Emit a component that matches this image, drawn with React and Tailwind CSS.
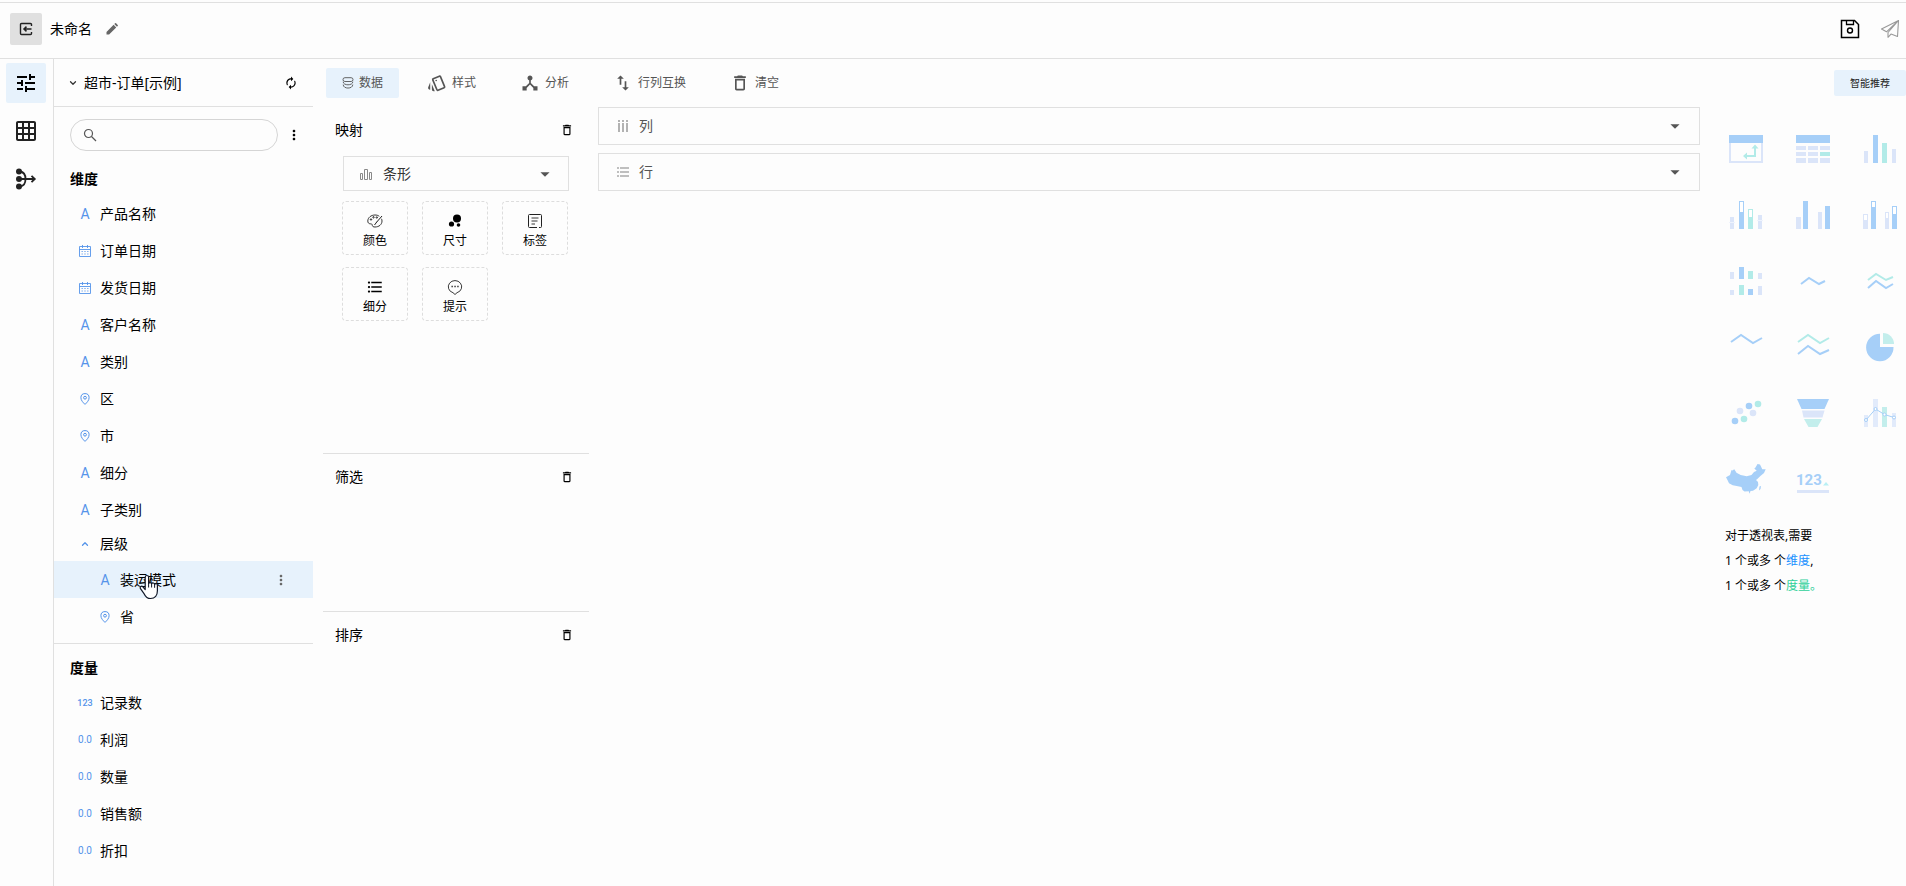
import { useState } from 'react';
import {
  MdArrowDropDown,
  MdAutorenew,
  MdFormatListBulleted,
  MdGridOn,
  MdMoreVert,
  MdOutlineDelete,
  MdOutlineDeviceHub,
  MdOutlineStyle,
  MdSwapVert,
  MdTune,
} from 'react-icons/md';
import { ChevronDown, ChevronUp } from 'lucide-react';
import clsx from 'clsx';

const BLUE = '#a6cff8';
const LIGHT = '#dbe5f9';
const TEAL = '#b2ebe8';

const dimensions = [
  { name: '产品名称', type: 'text' },
  { name: '订单日期', type: 'date' },
  { name: '发货日期', type: 'date' },
  { name: '客户名称', type: 'text' },
  { name: '类别', type: 'text' },
  { name: '区', type: 'geo' },
  { name: '市', type: 'geo' },
  { name: '细分', type: 'text' },
  { name: '子类别', type: 'text' },
];

const measures = [
  { name: '记录数', type: 'int' },
  { name: '利润', type: 'decimal' },
  { name: '数量', type: 'decimal' },
  { name: '销售额', type: 'decimal' },
  { name: '折扣', type: 'decimal' },
];

/* ---------- icons ---------- */

function Svg({ size = 16, className, children }) {
  return (
    <svg width={size} height={size} viewBox={`0 0 ${size} ${size}`} fill="none" stroke="currentColor" className={clsx('shrink-0', className)} aria-hidden="true">
      {children}
    </svg>
  );
}

const BackIcon = () => (
  <Svg size={14} className="text-[#222]">
    <path d="M12.5 4V2.5a1 1 0 0 0-1-1h-9a1 1 0 0 0-1 1v9a1 1 0 0 0 1 1h9a1 1 0 0 0 1-1V10" strokeWidth="1.4" />
    <path d="M12.5 7H5.5M7.5 4.6 5 7l2.5 2.4" strokeWidth="1.5" />
  </Svg>
);

const PencilIcon = () => (
  <Svg size={12} className="text-[#666]">
    <path d="M.5 11.5v-2.600L7.600 1.800l2.600 2.600L3.100 11.500zM8.300 1.100l.8-.8a.7.7 0 0 1 1 0l1.600 1.600a.7.7 0 0 1 0 1l-.8.8z" fill="currentColor" stroke="none" />
  </Svg>
);

const SaveIcon = () => (
  <Svg size={20} className="text-black">
    <path d="M1.500 1.500h13l4 4v13h-17z" strokeWidth="1.500" />
    <path d="M6.500 1.500v4h7v-4" strokeWidth="1.300" />
    <circle cx="10" cy="11.500" r="2.500" strokeWidth="1.400" />
  </Svg>
);

const SendIcon = () => (
  <Svg size={20} className="text-[#999]">
    <path d="M18.500 1.500 1.500 10l5 2.800L18.500 1.500 8 13.500v4.800l3-3.200 6.500 2.400z" strokeWidth="1.100" strokeLinejoin="round" />
  </Svg>
);

const MergeIcon = () => (
  <Svg size={22} className="text-[#222]">
    <g fill="currentColor" stroke="none">
      <circle cx="4" cy="3.500" r="3" />
      <circle cx="4" cy="11" r="3" />
      <circle cx="4" cy="18.500" r="3" />
    </g>
    <path d="M5 3.500c4 .5 5.500 4 5.500 7.500S9 18 5 18.500M4 11h15.500M16.500 7.800 19.800 11l-3.300 3.200" strokeWidth="1.800" />
  </Svg>
);

const SearchIcon = () => (
  <Svg size={14} className="text-[#555]">
    <circle cx="5.500" cy="5.500" r="4" strokeWidth="1.200" />
    <path d="m8.500 8.500 4.500 4.500" strokeWidth="1.300" />
  </Svg>
);

const DatabaseIcon = () => (
  <Svg size={12} className="text-[#555]">
    <rect x="1" y=".7" width="10" height="3.800" rx="1.900" strokeWidth=".9" />
    <path d="M1.200 4.800c0 4 9.600 4 9.600 0M1.200 7.600c0 4.600 9.600 4.600 9.600 0" strokeWidth=".9" />
  </Svg>
);

const BarIcon = () => (
  <Svg size={12} className="text-[#888]">
    <path d="M.5 5.500h2v6h-2zM4.500 1.500h3v10h-3zM9.500 4.500h2v7h-2z" />
  </Svg>
);

const ColumnsIcon = () => (
  <Svg size={12} className="text-[#999]">
    <path d="M2 0v2M6 0v2M10 0v2M2 3v9M6 3v9M10 3v9" strokeWidth="1.500" />
  </Svg>
);

const RowsIcon = () => (
  <Svg size={12} className="text-[#aaa]">
    <path d="M0 2h2M0 6h2M0 10h2M3 2h9M3 6h9M3 10h9" strokeWidth="1.500" />
  </Svg>
);

const PaletteIcon = () => (
  <Svg size={16} className="text-[#222]">
    <path d="M12.300 3.300C11 2.300 9.600 2 8 2 4 2 .8 4.700.8 8c0 1.800 1 2.800 2.500 2.800 1.300 0 2 .4 2 1.500 0 1.200 1 1.700 2.700 1.700 4 0 7-2.500 7-6 0-.8-.2-1.500-.5-2.200" strokeWidth=".9" />
    <path d="m15 3-5.500 6.300M10 8.700 7.500 12" />
    <circle cx="4" cy="6.500" r=".7" />
    <circle cx="6.500" cy="4.300" r=".7" />
    <circle cx="9.800" cy="4.500" r=".7" />
  </Svg>
);

const BubblesIcon = () => (
  <Svg size={14}>
    <g fill="currentColor" stroke="none">
      <circle cx="9" cy="4.500" r="4" />
      <circle cx="3.500" cy="10" r="2.600" />
      <circle cx="10.500" cy="11" r="1.800" />
    </g>
  </Svg>
);

const LabelIcon = () => (
  <Svg size={16} className="text-[#222]">
    <path d="M10 14.500H2.500a1 1 0 0 1-1-1v-11a1 1 0 0 1 1-1h11a1 1 0 0 1 1 1v11a1 1 0 0 1-1 1H12" />
    <path d="M4.500 5h7M4.500 8h6M4.500 11H8" strokeWidth=".9" />
  </Svg>
);

const TooltipIcon = () => (
  <Svg size={16} className="text-[#222]">
    <path d="M8 15.500 6 13.700A6.700 6.200 0 1 1 10 13.700z" strokeWidth=".9" />
    <path d="M4.500 7.500h1.300M7.400 7.500h1.300M10.300 7.500h1.300" strokeWidth="1.300" />
  </Svg>
);

const CalendarIcon = () => (
  <Svg size={12} className="text-[#5594ea]">
    <path d="M.5 1.500h11v10H.5zM.5 4.500h11M3.500 0v3M8.500 0v3" strokeWidth=".9" />
    <path d="M2.500 6.500h7M2.500 9h7" strokeDasharray="1.400 1.400" strokeWidth=".8" />
  </Svg>
);

const PinIcon = () => (
  <Svg size={12} className="text-[#5594ea]">
    <path d="M6 11.400C4 9.500 1.900 7.300 1.900 4.700a4.100 4.100 0 0 1 8.200 0C10.100 7.300 8 9.500 6 11.400z" />
    <circle cx="6" cy="4.700" r="1.400" />
  </Svg>
);

function HandCursor() {
  return (
    <svg width="20" height="26" viewBox="0 0 20 26" className="absolute left-[85px] top-[13px] pointer-events-none" aria-hidden="true">
      <path
        d="M6.200 15.500V3.200a1.700 1.700 0 0 1 3.400 0v6.300a1.600 1.600 0 0 1 3 .3 1.600 1.600 0 0 1 3 .7 1.500 1.500 0 0 1 2.800.9v5.400c0 4.500-2.400 7.700-6.800 7.700-3.400 0-5-1.600-6.400-4.600L1.300 14.400c-.7-1.800 1.400-2.900 2.600-1.500z"
        fill="#fff" stroke="#111827" strokeWidth="1.200" strokeLinejoin="round"
      />
      <path d="M9.600 9.500v4M12.600 10v3.500M15.600 10.800v3" stroke="#111827" strokeWidth="1" />
    </svg>
  );
}

function FieldIcon({ type }) {
  return (
    <span className="w-5 shrink-0 flex items-center justify-center text-[#5594ea]">
      {type === 'text' && <span className="text-sm leading-4 font-['Roboto',sans-serif]">A</span>}
      {type === 'date' && <CalendarIcon />}
      {type === 'geo' && <PinIcon />}
      {type === 'int' && <span className="text-[9px] leading-4 font-medium font-['Roboto',sans-serif]">123</span>}
      {type === 'decimal' && <span className="text-[10px] leading-4 font-['Roboto',sans-serif]">0.0</span>}
    </span>
  );
}

/* ---------- chart thumbnails ---------- */

// each bar is [x, y, width, height, color, height of the hollow cap]
function Bars({ items }) {
  return items.map(([x, y, w, h, color, cap]) => (
    <g key={`${x}-${y}`}>
      <rect x={x} y={y} width={w} height={h} fill={color} />
      {cap && <rect x={x + 1} y={y + 1} width={w - 2} height={cap - 1} fill="#fff" />}
    </g>
  ));
}

function Line({ points, color }) {
  return <polyline points={points} fill="none" stroke={color} strokeWidth="2" />;
}

const charts = [
  {
    name: '透视表',
    art: (
      <>
        <path d="M4 13v20h32V13" fill="none" stroke={LIGHT} strokeWidth="2" />
        <rect x="3" y="6" width="34" height="8" fill={BLUE} />
        <path d="M20 27h9V19" fill="none" stroke={TEAL} strokeWidth="2" />
        <path d="M17 27l4-3.500v7zM29 15.500l-3.500 4h7z" fill={TEAL} />
      </>
    ),
  },
  {
    name: '明细表',
    art: (
      <>
        <rect x="3" y="6" width="34" height="8" fill={BLUE} />
        <path d="M3 17h10v4H3zM15 17h10v4H15zM27 17h10v4H27zM3 23h10v4H3zM15 23h10v4H15zM3 29h10v5H3zM15 29h10v5H15zM27 29h10v5H27z" fill={LIGHT} />
        <rect x="27" y="23" width="10" height="4" fill={TEAL} />
      </>
    ),
  },
  { name: '柱状图', art: <Bars items={[[4, 22, 4, 12, LIGHT], [13, 6, 5, 28, BLUE], [22, 14, 5, 20, TEAL], [32, 20, 4, 14, LIGHT]]} /> },
  {
    name: '堆积柱状图',
    art: (
      <>
        <Bars items={[[4, 22, 4, 12, LIGHT], [13, 6, 5, 28, BLUE, 11], [22, 14, 5, 20, TEAL, 8], [32, 20, 4, 14, LIGHT]]} />
        <path d="M3 27.500h6M31 25.500h6" stroke="#eef3fd" />
      </>
    ),
  },
  { name: '并列柱状图', art: <Bars items={[[3, 22, 5, 12, LIGHT], [10, 6, 5, 28, BLUE], [25, 17, 4, 17, LIGHT], [32, 11, 5, 23, BLUE]]} /> },
  { name: '并列堆积柱状图', art: <Bars items={[[3, 19, 5, 15, LIGHT, 6], [11, 6, 5, 28, BLUE, 6], [25, 17, 4, 17, LIGHT, 6], [32, 11, 5, 23, BLUE, 8]]} /> },
  {
    name: '多行柱状图',
    art: (
      <Bars
        items={[
          [4, 11, 4, 7, LIGHT], [13, 6, 5, 12, BLUE], [22, 10, 5, 8, TEAL], [32, 12, 4, 6, LIGHT],
          [4, 29, 4, 5, LIGHT], [13, 24, 5, 10, TEAL], [22, 28, 5, 6, BLUE], [32, 25, 4, 9, LIGHT],
        ]}
      />
    ),
  },
  { name: '迷你折线图', art: <Line points="8,23 16,17 26,23 32,20" color={BLUE} /> },
  { name: '迷你双折线图', art: <><Line points="8,19 16,13 26,19 33,16" color={TEAL} /><Line points="8,27 16,20 26,27 33,23" color={BLUE} /></> },
  { name: '折线图', art: <Line points="5,15 15,8 27,16 36,11" color={BLUE} /> },
  { name: '双折线图', art: <><Line points="5,15 15,8 27,16 36,11" color={TEAL} /><Line points="5,27 15,19 27,27 36,23" color={BLUE} /></> },
  {
    name: '饼图',
    art: (
      <>
        <path d="M20 20h13.500A13.700 13.700 0 1 1 20 6.800z" fill={BLUE} />
        <path d="M23 17V6a11 11 0 0 1 11 11z" fill="#c3eeec" />
      </>
    ),
  },
  {
    name: '散点图',
    art: (
      <>
        <g fill={BLUE}><circle cx="9" cy="28" r="3.300" /><circle cx="23" cy="13" r="3.300" /></g>
        <g fill={TEAL}><circle cx="32" cy="11" r="3.300" /><circle cx="18" cy="26" r="3.300" /></g>
        <g fill={LIGHT}><circle cx="14" cy="18" r="3.300" /><circle cx="27" cy="20" r="3.300" /></g>
      </>
    ),
  },
  {
    name: '漏斗图',
    art: (
      <>
        <path d="M4 6h32l-4.500 10h-23z" fill={BLUE} />
        <path d="M9 17.500h22.500l-2 7h-19z" fill={LIGHT} />
        <path d="M11 26h18l-4.500 8h-9z" fill="#c3eeec" />
      </>
    ),
  },
  {
    name: '组合图',
    art: (
      <>
        <Bars items={[[4, 22, 4, 12, '#e2ebfb'], [13, 6, 5, 28, '#e2ebfb'], [22, 14, 5, 20, '#c3eeec'], [32, 20, 4, 14, '#e2ebfb']]} />
        <g fill="#fff" stroke={BLUE}>
          <polyline points="6,27 15.500,16 24.500,21.500 34,24.500" fill="none" />
          <circle cx="6" cy="27" r="1.500" /><circle cx="15.500" cy="16" r="1.500" /><circle cx="24.500" cy="21.500" r="1.500" /><circle cx="34" cy="24.500" r="1.500" />
        </g>
      </>
    ),
  },
  {
    name: '地图',
    art: (
      <>
        <path
          d="M0 18.300 4 16 5.500 11 6.300 11.500 8.300 10.300 10.500 13.700 14.700 16 20.700 17.300 25.500 16 28 13 30.700 11.700 28.300 9.500 29.500 8.500 31.500 5 34 5.500 36.300 10.300 39.700 10.300 38 14 34.700 16.700 31.300 20 30 21 32 23 32.300 26 30.700 29.300 27 31.700 24.500 32 23.700 34.700 22.700 32.300 18.500 32.500 16.500 31 15.500 28 10.700 27 6.700 26.300 3 24.300 1.500 21z"
          fill={BLUE}
        />
        <path d="M33.500 27.500l1.500-.5-.5 3-1.500 1.500z" fill={BLUE} />
      </>
    ),
  },
  {
    name: '指标卡',
    art: (
      <>
        <text x="3" y="26" fontSize="15" fontWeight="700" fill={BLUE} fontFamily="Roboto, sans-serif">123</text>
        <path d="M30 26.500l3-3.500 3 3.500z" fill="#b8f0f4" />
        <rect x="4" y="31" width="32" height="3" fill={LIGHT} />
      </>
    ),
  },
];

/* ---------- layout pieces ---------- */

function Header() {
  return (
    <header className="h-[57px] border-y border-[#e0e0e0] flex items-center pl-[10px] pr-[6px] pb-1">
      <button aria-label="返回" className="size-8 rounded-xs bg-[#e0e0e0] flex items-center justify-center">
        <BackIcon />
      </button>
      <h1 className="ml-2 text-sm">未命名</h1>
      <button aria-label="重命名" className="ml-[14px]">
        <PencilIcon />
      </button>
      <div className="ml-auto flex items-center gap-5">
        <button aria-label="保存"><SaveIcon /></button>
        <button aria-label="发布"><SendIcon /></button>
      </div>
    </header>
  );
}

function Rail() {
  const items = [
    { label: '配置', icon: <MdTune size={24} /> },
    { label: '表格', icon: <MdGridOn size={24} /> },
    { label: '合并', icon: <MergeIcon /> },
  ];
  return (
    <nav className="w-[54px] shrink-0 border-r border-[#e0e0e0] pt-1 pl-[6px] flex flex-col gap-2 text-[#222]">
      {items.map((item, i) => (
        <button key={item.label} aria-label={item.label} className={clsx('size-10 rounded-xs flex items-center justify-center', i === 0 && 'bg-[#e7f2fc] text-black')}>
          {item.icon}
        </button>
      ))}
    </nav>
  );
}

function Field({ field, nested, active }) {
  return (
    <li className={clsx('relative h-[37px] flex items-center pr-6', nested ? 'pl-[41px]' : 'pl-[21px]', active && 'bg-[#e7f2fc]')}>
      <FieldIcon type={field.type} />
      <span className="ml-[5px] text-sm">{field.name}</span>
      {active && (
        <>
          <button aria-label="更多" className="ml-auto text-[#666]">
            <MdMoreVert size={16} />
          </button>
          <HandCursor />
        </>
      )}
    </li>
  );
}

function Sidebar() {
  return (
    <aside className="w-[259px] shrink-0">
      <div className="h-12 border-b border-[#e0e0e0] flex items-center pl-[14px] pr-[15px]">
        <ChevronDown size={10} strokeWidth={3} className="text-[#333]" />
        <span className="ml-[6px] text-sm">超市-订单[示例]</span>
        <button aria-label="刷新" className="ml-auto">
          <MdAutorenew size={14} />
        </button>
      </div>

      <div className="flex items-center gap-2 pt-3 pl-4 pr-[11px]">
        <label className="h-8 flex-1 min-w-0 border border-[#d5d5d5] rounded-full flex items-center gap-2 px-3">
          <SearchIcon />
          <input type="text" aria-label="搜索字段" className="flex-1 min-w-0 text-sm outline-none" />
        </label>
        <button aria-label="更多">
          <MdMoreVert size={16} />
        </button>
      </div>

      <section className="mt-4 pb-2 border-b border-[#e0e0e0]">
        <h2 className="px-4 h-7 leading-6 text-sm font-bold">维度</h2>
        <ul>
          {dimensions.map((f) => <Field key={f.name} field={f} />)}
          <li>
            <button className="h-[33px] w-full flex items-center pl-[21px] pb-[2px] text-sm">
              <span className="w-5 flex justify-center text-[#5594ea]"><ChevronUp size={10} strokeWidth={3} /></span>
              <span className="ml-[5px]">层级</span>
            </button>
            <ul>
              <Field field={{ name: '装运模式', type: 'text' }} nested active />
              <Field field={{ name: '省', type: 'geo' }} nested />
            </ul>
          </li>
        </ul>
      </section>

      <section className="pt-3">
        <h2 className="px-4 h-7 leading-6 text-sm font-bold">度量</h2>
        <ul>
          {measures.map((f) => <Field key={f.name} field={f} />)}
        </ul>
      </section>
    </aside>
  );
}

function Toolbar() {
  const [active, setActive] = useState('数据');
  const tabs = [
    { name: '数据', icon: <DatabaseIcon /> },
    { name: '样式', icon: <MdOutlineStyle size={20} /> },
    { name: '分析', icon: <MdOutlineDeviceHub size={20} /> },
    { name: '行列互换', icon: <MdSwapVert size={20} /> },
    { name: '清空', icon: <MdOutlineDelete size={20} /> },
  ];
  return (
    <div className="h-12 flex items-center pl-[13px]">
      <div className="flex gap-3">
        {tabs.map((tab) => (
          <button
            key={tab.name}
            onClick={() => setActive(tab.name)}
            className={clsx('h-[30px] rounded-xs flex items-center gap-[5px] px-4 text-xs text-[#555]', active === tab.name && 'bg-[#e7f2fc]')}
          >
            {tab.icon}
            {tab.name}
          </button>
        ))}
      </div>
      <button className="ml-auto h-[26px] w-[72px] rounded-xs bg-[#e7f2fc] text-[10px] text-[#222]">智能推荐</button>
    </div>
  );
}

function PanelTitle({ children }) {
  return (
    <div className="flex items-center justify-between pl-3 pr-[15px] h-[46px]">
      <h2 className="text-sm">{children}</h2>
      <button aria-label={`清空${children}`}>
        <MdOutlineDelete size={14} />
      </button>
    </div>
  );
}

function MappingPanel() {
  const tiles = [
    { name: '颜色', icon: <PaletteIcon /> },
    { name: '尺寸', icon: <BubblesIcon /> },
    { name: '标签', icon: <LabelIcon /> },
    { name: '细分', icon: <MdFormatListBulleted size={18} /> },
    { name: '提示', icon: <TooltipIcon /> },
  ];
  return (
    <div className="w-[266px] shrink-0">
      <section className="h-[346px]">
        <PanelTitle>映射</PanelTitle>
        <div className="px-5 pt-[3px]">
          <div className="relative h-[35px] border border-[#e0e0e0] flex items-center pl-4">
            <BarIcon />
            <select aria-label="图形" defaultValue="bar" className="appearance-none absolute inset-0 pl-[39px] text-sm text-[#333] outline-none">
              <option value="bar">条形</option>
              <option value="line">折线</option>
            </select>
            <MdArrowDropDown size={22} className="absolute right-3 text-[#555] pointer-events-none" />
          </div>
        </div>
        <div className="mt-[10px] pl-[19px] grid grid-cols-[66px_66px_66px] gap-x-[14px] gap-y-3">
          {tiles.map((tile) => (
            <button key={tile.name} className="h-[54px] border border-dashed border-[#ddd] rounded-sm flex flex-col items-center justify-center gap-[2px] pt-[3px] text-xs">
              <span className="h-5 flex items-center">{tile.icon}</span>
              {tile.name}
            </button>
          ))}
        </div>
      </section>
      <section className="h-[158px] border-t border-[#e0e0e0]">
        <PanelTitle>筛选</PanelTitle>
      </section>
      <section className="border-t border-[#e0e0e0]">
        <PanelTitle>排序</PanelTitle>
      </section>
    </div>
  );
}

function Shelf({ icon, name }) {
  return (
    <button aria-expanded="false" className="w-full h-[38px] border border-[#e0e0e0] flex items-center pl-[18px] pr-[13px] text-sm text-[#555]">
      {icon}
      <span className="ml-[10px]">{name}</span>
      <MdArrowDropDown size={22} className="ml-auto" />
    </button>
  );
}

function Recommend() {
  return (
    <div className="w-[206px] shrink-0 pt-[22px] pl-[25px] text-xs">
      <div className="pl-px grid grid-cols-[40px_40px_40px] gap-x-[27px] gap-y-[26px]">
        {charts.map((chart) => (
          <button key={chart.name} aria-label={chart.name} className="size-10">
            <svg width="40" height="40" viewBox="0 0 40 40" aria-hidden="true">{chart.art}</svg>
          </button>
        ))}
      </div>
      <div className="mt-6 leading-[25px]">
        <p>对于透视表,需要</p>
        <p>1 个或多 个<span className="text-[#1890ff]">维度</span>,</p>
        <p>1 个或多 个<span className="text-[#2fd09a]">度量。</span></p>
      </div>
    </div>
  );
}

export default function App() {
  return (
    <div className="min-h-screen flex flex-col bg-[#fdfdfd] pt-[2px] text-black overflow-x-hidden font-['Noto_Sans','Noto_Sans_CJK_SC',sans-serif]">
      <Header />
      <div className="flex-1 flex">
        <Rail />
        <Sidebar />
        <main className="flex-1 min-w-0">
          <Toolbar />
          <div className="flex pl-[10px]">
            <MappingPanel />
            <div className="flex-1 min-w-0 ml-[9px] flex flex-col gap-2">
              <Shelf icon={<ColumnsIcon />} name="列" />
              <Shelf icon={<RowsIcon />} name="行" />
            </div>
            <Recommend />
          </div>
        </main>
      </div>
    </div>
  );
}
